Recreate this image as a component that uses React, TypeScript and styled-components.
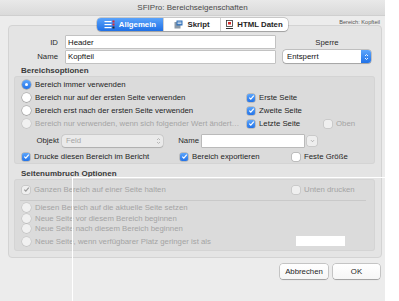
import styled, { createGlobalStyle } from "styled-components"

const GlobalStyle = createGlobalStyle`
  html, body {
    margin: 0;
    padding: 0;
    background: #fff;
  }
  body {
    font-family: "Liberation Sans", Arial, sans-serif;
    font-size: 7.8px;
    color: #1e1e1e;
  }
  * {
    box-sizing: border-box;
  }
`

const Page = styled.div`
  position: relative;
  width: 399px;
  height: 301px;
  overflow: hidden;
`

const Window = styled.div`
  width: 385px;
  height: 301px;
  background: #ececec;
  display: flex;
  flex-direction: column;
`

const TitleBar = styled.div`
  height: 16px;
  flex: none;
  display: flex;
  align-items: center;
  justify-content: center;
  font-size: 8px;
  color: #4a4a4a;
  background: linear-gradient(#e9e9e9, #dadada);
  border-bottom: 1px solid #cfcfcf;
`

const Body = styled.div`
  padding: 2px 3px 0 8px;
  display: flex;
  flex-direction: column;
`

const TabRow = styled.div`
  display: grid;
  grid-template-columns: 1fr auto 1fr;
  height: 13px;
  position: relative;
  z-index: 1;
`

const Segmented = styled.div`
  grid-column: 2;
  display: flex;
  margin-right: 5px;
  border-radius: 4px;
  background: #fff;
  box-shadow: 0 0 0 0.5px rgba(0, 0, 0, 0.28), 0 0.5px 1px rgba(0, 0, 0, 0.18);
  overflow: hidden;
`

const Segment = styled.div<{ $active?: boolean; $w: number }>`
  width: ${(p) => p.$w}px;
  display: flex;
  align-items: center;
  justify-content: center;
  gap: 4px;
  font-weight: bold;
  font-size: 7.8px;
  color: ${(p) => (p.$active ? "#fff" : "#1e1e1e")};
  background: ${(p) => (p.$active ? "linear-gradient(#5aa3fb, #1f70e6)" : "transparent")};
  & + & {
    border-left: 1px solid #d0d0d0;
  }
`

const Crumb = styled.div`
  grid-column: 3;
  justify-self: end;
  align-self: start;
  margin-top: 1px;
  padding-right: 2px;
  font-size: 5.6px;
  color: #555;
`

const Panel = styled.div`
  margin-top: -6px;
  background: #e4e4e4;
  border: 1px solid #d3d3d3;
  border-radius: 4px;
  padding: 10px 0 6px 0;
  display: flex;
  flex-direction: column;
`

const FieldGrid = styled.div`
  display: grid;
  grid-template-columns: 41px 209px 88px;
  grid-template-rows: 12px 13px;
  column-gap: 8px;
  row-gap: 2px;
  padding-left: 8px;
  align-items: center;
`

const FieldLabel = styled.div<{ $center?: boolean; $pad?: number }>`
  text-align: ${(p) => (p.$center ? "center" : "right")};
  padding-right: ${(p) => p.$pad ?? 0}px;
  white-space: nowrap;
  color: #2a2a2a;
`

const TextField = styled.input<{ $w?: number }>`
  width: ${(p) => (p.$w ? `${p.$w}px` : "100%")};
  height: 12px;
  margin: 0;
  padding: 0 2px;
  border: none;
  outline: none;
  background: #fff;
  box-shadow: 0 0 0 0.5px rgba(0, 0, 0, 0.3);
  font: inherit;
  color: #111;
`

const Select = styled.div<{ $disabled?: boolean; $w?: number }>`
  width: ${(p) => (p.$w ? `${p.$w}px` : "100%")};
  height: ${(p) => (p.$disabled ? 12 : 13)}px;
  display: flex;
  align-items: center;
  justify-content: space-between;
  padding-left: 4px;
  border-radius: 3px;
  background: ${(p) => (p.$disabled ? "#eaeaea" : "#fff")};
  color: ${(p) => (p.$disabled ? "#a5a5a5" : "#111")};
  box-shadow: 0 0 0 0.5px rgba(0, 0, 0, ${(p) => (p.$disabled ? 0.12 : 0.3)}), 0 0.5px 1px rgba(0, 0, 0, 0.15);
`

const Stepper = styled.span<{ $blue?: boolean }>`
  width: 10px;
  height: 100%;
  display: flex;
  align-items: center;
  justify-content: center;
  border-radius: 0 3px 3px 0;
  background: ${(p) => (p.$blue ? "linear-gradient(#5ea6fc, #2172e8)" : "transparent")};
`

const SectionTitle = styled.div<{ $top: number }>`
  margin: ${(p) => p.$top}px 0 0 12px;
  height: 10px;
  line-height: 10px;
  font-weight: bold;
  font-size: 8px;
  color: #3a3a3a;
`

const Group = styled.div<{ $pad: string }>`
  margin: 0 6px 0 5px;
  padding: ${(p) => p.$pad};
  background: #dbdbdb;
  border-radius: 3px;
  box-shadow: inset 0 0 0 1px rgba(0, 0, 0, 0.03);
  display: flex;
  flex-direction: column;
`

const OptionGrid = styled.div`
  display: grid;
  grid-template-columns: 225px 77px 1fr;
  grid-auto-rows: 13px;
  align-items: center;
`

const Option = styled.div<{ $disabled?: boolean; $col?: number; $row?: number }>`
  display: flex;
  align-items: center;
  gap: 4px;
  white-space: nowrap;
  grid-column: ${(p) => p.$col ?? "auto"};
  grid-row: ${(p) => p.$row ?? "auto"};
  color: ${(p) => (p.$disabled ? "#a4a4a4" : "#1e1e1e")};
`

const RadioDot = styled.span<{ $checked?: boolean; $disabled?: boolean }>`
  position: relative;
  flex: none;
  width: 9px;
  height: 9px;
  border-radius: 50%;
  background: ${(p) =>
    p.$checked ? "linear-gradient(#5ca5fb, #2373e8)" : p.$disabled ? "#f1f1f1" : "#fff"};
  box-shadow: 0 0 0 0.5px rgba(0, 0, 0, ${(p) => (p.$disabled ? 0.12 : 0.28)}),
    0 0.5px 1px rgba(0, 0, 0, ${(p) => (p.$disabled ? 0.08 : 0.2)});
  &::after {
    content: "";
    display: ${(p) => (p.$checked ? "block" : "none")};
    position: absolute;
    left: 3px;
    top: 3px;
    width: 3px;
    height: 3px;
    border-radius: 50%;
    background: #fff;
  }
`

const Box = styled.span<{ $checked?: boolean; $disabled?: boolean }>`
  flex: none;
  width: 8px;
  height: 8px;
  border-radius: 2px;
  display: flex;
  align-items: center;
  justify-content: center;
  background: ${(p) =>
    p.$checked && !p.$disabled ? "linear-gradient(#5ca5fb, #2373e8)" : p.$disabled ? "#efefef" : "#fff"};
  box-shadow: 0 0 0 0.5px rgba(0, 0, 0, ${(p) => (p.$disabled ? 0.15 : 0.28)});
`

const ObjRow = styled.div`
  margin-top: 3px;
  height: 15px;
  display: grid;
  grid-template-columns: 40px 116px 24px 105px 10px;
  align-items: center;
`

const SmallButton = styled.span`
  width: 10px;
  height: 10px;
  border-radius: 2px;
  background: #eeeeee;
  box-shadow: 0 0 0 0.5px rgba(0, 0, 0, 0.15);
  display: flex;
  align-items: center;
  justify-content: center;
`

const CheckRow = styled.div<{ $top?: number }>`
  margin-top: ${(p) => p.$top ?? 0}px;
  height: 13px;
  display: grid;
  grid-template-columns: 158px 112px 1fr;
  align-items: center;
`

const WideRow = styled.div`
  height: 13px;
  display: grid;
  grid-template-columns: 270px 1fr;
  align-items: center;
`

const Separator = styled.div`
  margin: 3.5px 0 2.5px -2px;
  width: 346px;
  height: 1px;
  background: #c9c9c9;
`

const RadioList = styled.div`
  display: flex;
  flex-direction: column;
  gap: 1.5px;
`

const RadioRow = styled.div`
  height: 13px;
  display: grid;
  grid-template-columns: 274px 49px;
  align-items: center;
`

const PlainField = styled.div`
  height: 10px;
  background: #fff;
`

const ButtonRow = styled.div`
  margin-top: 6px;
  padding-right: 2px;
  display: flex;
  justify-content: flex-end;
  gap: 5px;
`

const Button = styled.div<{ $w: number }>`
  width: ${(p) => p.$w}px;
  height: 15px;
  display: flex;
  align-items: center;
  justify-content: center;
  background: linear-gradient(#ffffff, #f6f6f6);
  border-radius: 3px;
  box-shadow: 0 0 0 0.5px rgba(0, 0, 0, 0.3), 0 0.5px 1px rgba(0, 0, 0, 0.2);
  color: #1e1e1e;
`

const Marquee = styled.div`
  position: absolute;
  left: 72px;
  top: 177px;
  right: 0;
  bottom: 0;
  border-top: 1px solid #fff;
  border-left: 1px solid #fff;
  pointer-events: none;
`

const Tick = ({ gray }: { gray?: boolean }) => (
  <svg width="7" height="7" viewBox="0 0 7 7">
    <path d="M1.3 3.6 L2.8 5.2 L5.8 1.6" stroke={gray ? "#9a9a9a" : "#fff"} strokeWidth="1.2" fill="none" />
  </svg>
)

const UpDown = ({ color }: { color: string }) => (
  <svg width="5" height="8" viewBox="0 0 5 8">
    <path d="M1 3 L2.5 1.5 L4 3 M1 5 L2.5 6.5 L4 5" stroke={color} strokeWidth="0.9" fill="none" />
  </svg>
)

const Radio = ({ label, checked, disabled }: { label: string; checked?: boolean; disabled?: boolean }) => (
  <Option $disabled={disabled}>
    <RadioDot $checked={checked} $disabled={disabled} />
    {label}
  </Option>
)

const Check = ({
  label,
  checked,
  disabled,
  col,
  row,
}: {
  label: string
  checked?: boolean
  disabled?: boolean
  col?: number
  row?: number
}) => (
  <Option $disabled={disabled} $col={col} $row={row}>
    <Box $checked={checked} $disabled={disabled}>
      {checked && <Tick gray={disabled} />}
    </Box>
    {label}
  </Option>
)

const GeneralIcon = () => (
  <svg width="11" height="9" viewBox="0 0 11 9">
    <rect x="0.5" y="1" width="7" height="1.2" fill="#fff" />
    <rect x="0.5" y="4" width="7" height="1.2" fill="#fff" />
    <rect x="0.5" y="7" width="7" height="1.2" fill="#fff" />
    <rect x="8.5" y="0.5" width="2" height="2" fill="#e0282c" />
    <rect x="8.5" y="3.5" width="2" height="2" fill="#e0282c" />
    <rect x="8.5" y="6.5" width="2" height="2" fill="#2b2b2b" />
  </svg>
)

const ScriptIcon = () => (
  <svg width="9" height="9" viewBox="0 0 9 9">
    <rect x="0.5" y="2" width="6" height="6.5" fill="#8c9aa8" />
    <rect x="2.5" y="0.5" width="6" height="5" fill="#2e6fb8" />
    <rect x="3.5" y="1.7" width="4" height="0.8" fill="#fff" />
    <rect x="3.5" y="3.3" width="4" height="0.8" fill="#fff" />
  </svg>
)

const HtmlIcon = () => (
  <svg width="7" height="9" viewBox="0 0 7 9">
    <rect x="0.5" y="0.5" width="6" height="6" fill="#fff" stroke="#333" strokeWidth="0.8" />
    <rect x="2" y="2" width="3" height="2.5" fill="#d62a2a" />
    <rect x="0" y="8" width="7" height="1" fill="#333" />
  </svg>
)

const App = () => (
  <Page>
    <GlobalStyle />
    <Window>
      <TitleBar>SFIPro: Bereichseigenschaften</TitleBar>
      <Body>
        <TabRow>
          <Segmented>
            <Segment $active $w={66}>
              <GeneralIcon />
              Allgemein
            </Segment>
            <Segment $w={57}>
              <ScriptIcon />
              Skript
            </Segment>
            <Segment $w={68}>
              <HtmlIcon />
              HTML Daten
            </Segment>
          </Segmented>
          <Crumb>Bereich: Kopfteil</Crumb>
        </TabRow>

        <Panel>
          <FieldGrid>
            <FieldLabel>ID</FieldLabel>
            <TextField readOnly value="Header" />
            <FieldLabel $center>Sperre</FieldLabel>
            <FieldLabel>Name</FieldLabel>
            <TextField readOnly value="Kopfteil" />
            <Select>
              Entsperrt
              <Stepper $blue>
                <UpDown color="#fff" />
              </Stepper>
            </Select>
          </FieldGrid>

          <SectionTitle $top={3}>Bereichsoptionen</SectionTitle>
          <Group $pad="2px 8px 1px 8px">
            <OptionGrid>
              <Option $col={1} $row={1}>
                <RadioDot $checked />
                Bereich immer verwenden
              </Option>
              <Option $col={1} $row={2}>
                <RadioDot />
                Bereich nur auf der ersten Seite verwenden
              </Option>
              <Option $col={1} $row={3}>
                <RadioDot />
                Bereich erst nach der ersten Seite verwenden
              </Option>
              <Option $col={1} $row={4} $disabled>
                <RadioDot $disabled />
                Bereich nur verwenden, wenn sich folgender Wert ändert…
              </Option>
              <Check label="Erste Seite" checked col={2} row={2} />
              <Check label="Zweite Seite" checked col={2} row={3} />
              <Check label="Letzte Seite" checked col={2} row={4} />
              <Check label="Oben" disabled col={3} row={4} />
            </OptionGrid>
            <ObjRow>
              <FieldLabel $pad={3}>Objekt</FieldLabel>
              <Select $disabled $w={101}>
                Feld
                <Stepper>
                  <UpDown color="#b0b0b0" />
                </Stepper>
              </Select>
              <FieldLabel $pad={3}>Name</FieldLabel>
              <TextField readOnly value="" $w={102} />
              <SmallButton>
                <svg width="5" height="4" viewBox="0 0 5 4">
                  <path d="M1 1.2 L2.5 2.7 L4 1.2" stroke="#a0a0a0" strokeWidth="0.8" fill="none" />
                </svg>
              </SmallButton>
            </ObjRow>
            <CheckRow $top={2}>
              <Check label="Drucke diesen Bereich im Bericht" checked />
              <Check label="Bereich exportieren" checked />
              <Check label="Feste Größe" />
            </CheckRow>
          </Group>

          <SectionTitle $top={5}>Seitenumbruch Optionen</SectionTitle>
          <Group $pad="4px 8px 3.5px 8px">
            <WideRow>
              <Check label="Ganzen Bereich auf einer Seite halten" checked disabled />
              <Check label="Unten drucken" disabled />
            </WideRow>
            <Separator />
            <RadioList>
              <Radio label="Diesen Bereich auf die aktuelle Seite setzen" disabled />
              <Radio label="Neue Seite vor diesem Bereich beginnen" disabled />
              <Radio label="Neue Seite nach diesem Bereich beginnen" disabled />
              <RadioRow>
                <Radio label="Neue Seite, wenn verfügbarer Platz geringer ist als" disabled />
                <PlainField />
              </RadioRow>
            </RadioList>
          </Group>
        </Panel>

        <ButtonRow>
          <Button $w={48}>Abbrechen</Button>
          <Button $w={47}>OK</Button>
        </ButtonRow>
      </Body>
    </Window>
    <Marquee />
  </Page>
)

export default App
